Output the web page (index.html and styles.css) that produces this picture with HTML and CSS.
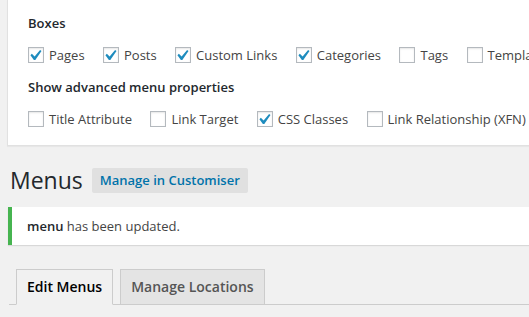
FILE: index.html
```html
<!DOCTYPE html>
<html lang="en">
<head>
    <meta charset="UTF-8">
    <title>Menus</title>
    <link rel="stylesheet" href="styles.css">
</head>
<body>

    <!-- Screen options panel -->
    <div class="screen-options">
        <h5>Boxes</h5>
        <div class="prefs">
            <label><span class="box"><svg viewBox="3.5 2 15 15"><path d="M14.83 4.89l1.34.94-5.81 8.38H9.02L5.78 9.67l1.34-1.25 2.57 2.4z"/></svg></span>Pages</label>
            <label><span class="box"><svg viewBox="3.5 2 15 15"><path d="M14.83 4.89l1.34.94-5.81 8.38H9.02L5.78 9.67l1.34-1.25 2.57 2.4z"/></svg></span>Posts</label>
            <label><span class="box"><svg viewBox="3.5 2 15 15"><path d="M14.83 4.89l1.34.94-5.81 8.38H9.02L5.78 9.67l1.34-1.25 2.57 2.4z"/></svg></span>Custom Links</label>
            <label><span class="box"><svg viewBox="3.5 2 15 15"><path d="M14.83 4.89l1.34.94-5.81 8.38H9.02L5.78 9.67l1.34-1.25 2.57 2.4z"/></svg></span>Categories</label>
            <label><span class="box"></span>Tags</label>
            <label><span class="box"></span>Template</label>
        </div>
        <h5>Show advanced menu properties</h5>
        <div class="prefs">
            <label><span class="box"></span>Title Attribute</label>
            <label><span class="box"></span>Link Target</label>
            <label><span class="box"><svg viewBox="3.5 2 15 15"><path d="M14.83 4.89l1.34.94-5.81 8.38H9.02L5.78 9.67l1.34-1.25 2.57 2.4z"/></svg></span>CSS Classes</label>
            <label><span class="box"></span>Link Relationship (XFN)</label>
        </div>
    </div>

    <!-- Page title -->
    <div class="title-row">
        <h1>Menus</h1>
        <a href="#" class="title-action">Manage in Customiser</a>
    </div>

    <!-- Notice -->
    <div class="notice">
        <p><strong>menu</strong> has been updated.</p>
    </div>

    <!-- Tabs -->
    <div class="tabs">
        <a href="#" class="tab active">Edit Menus</a>
        <a href="#" class="tab">Manage Locations</a>
    </div>

</body>
</html>
```

FILE: styles.css
```css
body {
    font-family: "Open Sans", sans-serif;
    font-size: 13px;
    color: #444;
    background-color: #f1f1f1;
    margin: 0;
    padding: 0;
    overflow: hidden;
}

/* Screen options */
.screen-options {
    margin-left: 7px;
    background: white;
    border-left: 1px solid #e1e1e1;
    border-bottom: 1px solid #e1e1e1;
    box-shadow: 0 1px 1px rgba(0, 0, 0, 0.04);
    padding: 13px 0 8px 20px;
}

.screen-options h5 {
    margin: 0 0 5px;
    font-size: 13px;
    font-weight: 600;
    line-height: 20px;
    color: #23282d;
}

.screen-options .prefs + h5 {
    margin-top: 4px;
    margin-bottom: 5px;
}

.prefs {
    white-space: nowrap;
    overflow: hidden;
    height: 35px;
}

.prefs label {
    display: inline-block;
    padding-right: 15px;
    line-height: 35px;
    vertical-align: top;
}

.box {
    display: inline-block;
    box-sizing: border-box;
    width: 16px;
    height: 16px;
    margin: 0 5px 0 0;
    vertical-align: -3px;
    border: 1px solid #b4b9be;
    background: #fff;
    box-shadow: inset 0 1px 2px rgba(0, 0, 0, 0.1);
    position: relative;
}

.box svg {
    position: absolute;
    left: -1px;
    top: -1px;
    width: 16px;
    height: 16px;
    fill: #1e8cbe;
}

/* Title */
.title-row {
    display: flex;
    align-items: center;
    margin: 20px 0 12px 10px;
}

h1 {
    margin: 0;
    font-size: 23px;
    font-weight: 400;
    line-height: 29px;
    color: #23282d;
}

.title-action {
    margin-left: 9px;
    padding: 4px 8px;
    line-height: 17px;
    font-weight: 600;
    color: #0073aa;
    background: #e0e0e0;
    border-radius: 2px;
    text-decoration: none;
}

/* Notice */
.notice {
    margin-left: 8px;
    background: white;
    border-left: 4px solid #46b450;
    box-shadow: 0 1px 1px rgba(0, 0, 0, 0.1);
    padding: 9px 15px;
}

.notice p {
    margin: 0;
    line-height: 20px;
}

.notice strong {
    font-weight: 600;
    color: #23282d;
}

/* Tabs */
.tabs {
    display: flex;
    margin: 24px 0 0 9px;
    border-bottom: 1px solid #ccc;
}

.tab {
    margin-left: 7px;
    margin-bottom: -1px;
    padding: 5px 10px;
    font-size: 14px;
    font-weight: 600;
    line-height: 24px;
    color: #555;
    background: #e4e4e4;
    border: 1px solid #ccc;
    text-decoration: none;
}

.tab.active {
    color: #000;
    background: #f1f1f1;
    border-bottom-color: #f1f1f1;
}
```
